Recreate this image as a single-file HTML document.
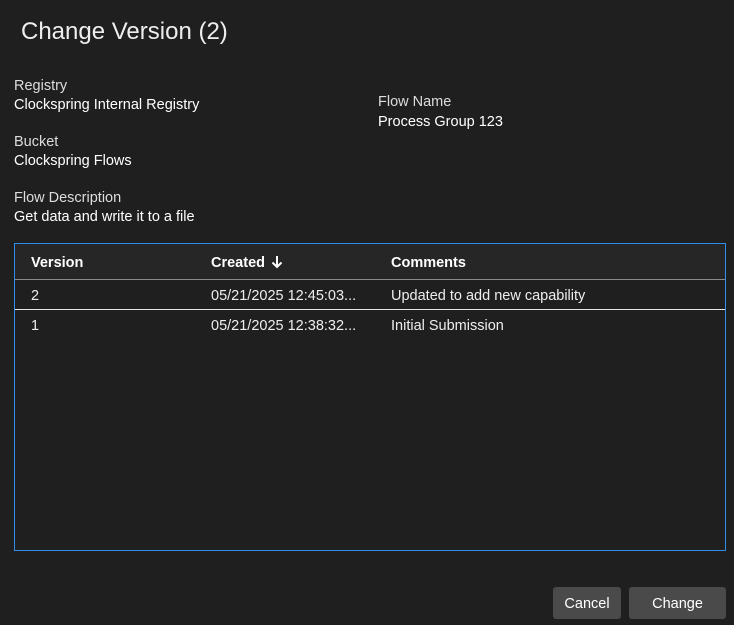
<!DOCTYPE html>
<html><head><style>
body{margin:0;width:734px;height:625px;background:#1f1f1f;font-family:"Liberation Sans",sans-serif;color:#fff;position:relative;overflow:hidden}
.a{position:absolute;font-size:14.5px;white-space:nowrap}
.l{color:#ddd}
.t{position:absolute;left:14px;top:243px;width:710px;height:306px;border:1px solid #2f8fe6}
.h{position:absolute;left:0;top:0;width:710px;height:35px;background:#262626;border-bottom:1px solid #8a8a8a}
.r2{position:absolute;left:0;top:65px;width:710px;border-top:1px solid #e6e6e6}
.c{position:absolute;font-size:14.5px;white-space:nowrap}
.b{position:absolute;top:587px;height:32px;background:#4a4a4a;border-radius:3px;color:#fff;font-size:14.5px;text-align:center;line-height:34px}
</style></head><body>
<div class="a" style="left:21px;top:18px;font-size:24px;color:#eee">Change Version (2)</div>
<div class="a l" style="left:14px;top:78px">Registry</div>
<div class="a" style="left:14px;top:97px">Clockspring Internal Registry</div>
<div class="a l" style="left:14px;top:134px">Bucket</div>
<div class="a" style="left:14px;top:153px">Clockspring Flows</div>
<div class="a l" style="left:14px;top:190px">Flow Description</div>
<div class="a" style="left:14px;top:209px">Get data and write it to a file</div>
<div class="a l" style="left:378px;top:94px">Flow Name</div>
<div class="a" style="left:378px;top:114px">Process Group 123</div>
<div class="t">
<div class="h"></div>
<div class="c" style="left:16px;top:11px;font-weight:bold">Version</div>
<div class="c" style="left:196px;top:11px;font-weight:bold">Created <svg width="12" height="14" viewBox="0 0 12 14" style="vertical-align:-2px;margin-left:2px"><path d="M6 1V12M1.5 7.5L6 12L10.5 7.5" stroke="#fff" stroke-width="2" fill="none"/></svg></div>
<div class="c" style="left:376px;top:11px;font-weight:bold">Comments</div>
<div class="c" style="left:16px;top:44px;color:#eee">2</div>
<div class="c" style="left:196px;top:44px;color:#eee">05/21/2025 12:45:03...</div>
<div class="c" style="left:376px;top:44px;color:#eee">Updated to add new capability</div>
<div class="r2"></div>
<div class="c" style="left:16px;top:74px;color:#eee">1</div>
<div class="c" style="left:196px;top:74px;color:#eee">05/21/2025 12:38:32...</div>
<div class="c" style="left:376px;top:74px;color:#eee">Initial Submission</div>
</div>
<div class="b" style="left:553px;width:68px">Cancel</div>
<div class="b" style="left:629px;width:97px">Change</div>
</body></html>
